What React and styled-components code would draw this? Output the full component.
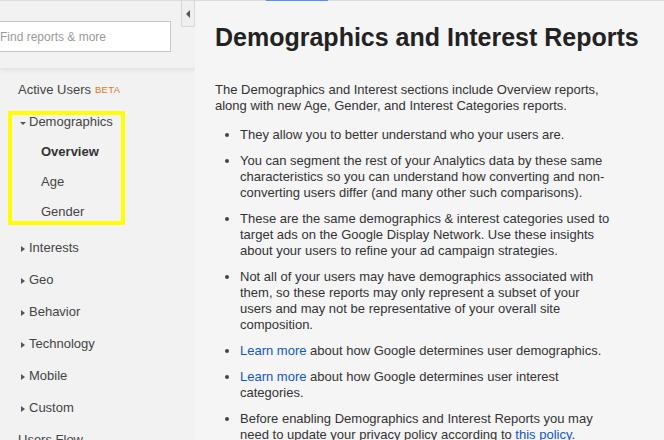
import React from "react";
import styled, { createGlobalStyle } from "styled-components";

const GlobalStyle = createGlobalStyle`
  html, body {
    margin: 0;
    padding: 0;
    background: #f5f5f5;
  }
  body {
    font-family: "Liberation Sans", Arial, sans-serif;
    font-size: 13px;
    color: #333;
  }
`;

const Page = styled.div`
  height: 440px;
  overflow: hidden;
  display: flex;
  flex-direction: column;
`;

const TopLine = styled.div`
  height: 1px;
  flex: none;
  background: #dcdcdc;
  display: flex;
`;

const TabMark = styled.div`
  width: 62px;
  margin-left: 266px;
  background: #4d90fe;
`;

const Body = styled.div`
  flex: 1;
  display: flex;
  min-height: 0;
`;

const Sidebar = styled.aside`
  width: 195px;
  flex: none;
  background: #f2f2f2;
  display: flex;
  flex-direction: column;
  position: relative;
  overflow: hidden;
`;

const SidebarHeader = styled.div`
  height: 67px;
  flex: none;
  display: flex;
  align-items: flex-start;
  border-bottom: 1px solid #e3e3e3;
  box-shadow: 0 2px 5px rgba(0, 0, 0, 0.06);
`;

const Search = styled.div`
  margin-top: 20px;
  margin-left: -10px;
  width: 181px;
  height: 31px;
  box-sizing: border-box;
  border: 1px solid #c6c6c6;
  background: #fff;
  display: flex;
  align-items: center;
  padding-left: 9px;
  font-size: 12px;
  color: #9a9a9a;
`;

const Collapse = styled.div`
  margin-left: auto;
  width: 14px;
  height: 26px;
  box-sizing: border-box;
  border: 1px solid #d8d8d8;
  border-top: none;
  background: #efefef;
  display: flex;
  align-items: center;
  justify-content: center;
`;

const LeftArrow = styled.span`
  width: 0;
  height: 0;
  border-top: 4px solid transparent;
  border-bottom: 4px solid transparent;
  border-right: 4px solid #555;
`;

const Nav = styled.nav`
  padding-top: 4px;
  display: flex;
  flex-direction: column;
`;

const Item = styled.div`
  display: flex;
  align-items: center;
  flex: none;
  height: ${(p) => p.$h || 32}px;
  padding-left: ${(p) => (p.$arrow ? "20px" : "18px")};
  color: #444;
  line-height: 16px;
  white-space: nowrap;
`;

const SubList = styled.div`
  display: flex;
  flex-direction: column;
  margin-top: -1px;
  padding-bottom: 5px;
`;

const SubItem = styled.div`
  height: 30px;
  flex: none;
  display: flex;
  align-items: center;
  padding-left: 41px;
  line-height: 16px;
  color: ${(p) => (p.$active ? "#333" : "#444")};
  font-weight: ${(p) => (p.$active ? 700 : 400)};
`;

const Arrow = styled.span`
  width: 0;
  height: 0;
  margin-right: 4px;
  ${(p) =>
    p.$open
      ? `
    border-left: 3px solid transparent;
    border-right: 3px solid transparent;
    border-top: 3px solid #555;
    margin-right: 3px;
    margin-top: 2px;
  `
      : `
    border-top: 3.5px solid transparent;
    border-bottom: 3.5px solid transparent;
    border-left: 4px solid #555;
    margin-left: 1px;
    margin-top: 1px;
  `}
`;

const Beta = styled.sup`
  font-size: 9.5px;
  color: #e5731a;
  margin-left: 4px;
  letter-spacing: 0.3px;
  vertical-align: 4px;
`;

const Highlight = styled.div`
  position: absolute;
  left: 8px;
  top: 110px;
  width: 117px;
  height: 114px;
  box-sizing: border-box;
  border: 4px solid #ffff00;
  pointer-events: none;
`;

const Main = styled.main`
  flex: 1;
  background: #f5f5f5;
  padding: 21px 0 0 20px;
  overflow: hidden;
`;

const Content = styled.div`
  width: 397px;
`;

const Title = styled.h1`
  margin: 0;
  font-size: 25px;
  line-height: 30px;
  font-weight: 700;
  color: #222;
  white-space: nowrap;
`;

const Intro = styled.p`
  margin: 30px 0 0;
  line-height: 16px;
`;

const List = styled.ul`
  margin: 13px 0 0;
  padding-left: 25px;
  line-height: 16px;

  li + li {
    margin-top: 10px;
  }
  li::marker {
    color: #444;
  }
`;

const Link = styled.a`
  color: #15c;
  text-decoration: none;
`;

const groups = ["Interests", "Geo", "Behavior", "Technology", "Mobile", "Custom"];

export default function App() {
  return (
    <Page>
      <GlobalStyle />
      <TopLine>
        <TabMark />
      </TopLine>
      <Body>
        <Sidebar>
          <SidebarHeader>
            <Search>Find reports &amp; more</Search>
            <Collapse>
              <LeftArrow />
            </Collapse>
          </SidebarHeader>
          <Nav>
            <Item $h={33}>
              Active Users<Beta>BETA</Beta>
            </Item>
            <Item $arrow>
              <Arrow $open />
              Demographics
            </Item>
            <SubList>
              <SubItem $active>Overview</SubItem>
              <SubItem>Age</SubItem>
              <SubItem>Gender</SubItem>
            </SubList>
            {groups.map((g) => (
              <Item $arrow key={g}>
                <Arrow />
                {g}
              </Item>
            ))}
            <Item>Users Flow</Item>
          </Nav>
          <Highlight />
        </Sidebar>
        <Main>
          <Content>
            <Title>Demographics and Interest Reports</Title>
            <Intro>
              The Demographics and Interest sections include Overview reports,
              along with new Age, Gender, and Interest Categories reports.
            </Intro>
            <List>
              <li>They allow you to better understand who your users are.</li>
              <li>
                You can segment the rest of your Analytics data by these same
                characteristics so you can understand how converting and
                non-converting users differ (and many other such comparisons).
              </li>
              <li>
                These are the same demographics &amp; interest categories used to
                target ads on the Google Display Network. Use these insights
                about your users to refine your ad campaign strategies.
              </li>
              <li>
                Not all of your users may have demographics associated with
                them, so these reports may only represent a subset of your
                users and may not be representative of your overall site
                composition.
              </li>
              <li>
                <Link href="#">Learn more</Link> about how Google determines user
                demographics.
              </li>
              <li>
                <Link href="#">Learn more</Link> about how Google determines user
                interest categories.
              </li>
              <li>
                Before enabling Demographics and Interest Reports you may need to
                update your privacy policy according to{" "}
                <Link href="#">this policy</Link>.
              </li>
            </List>
          </Content>
        </Main>
      </Body>
    </Page>
  );
}
